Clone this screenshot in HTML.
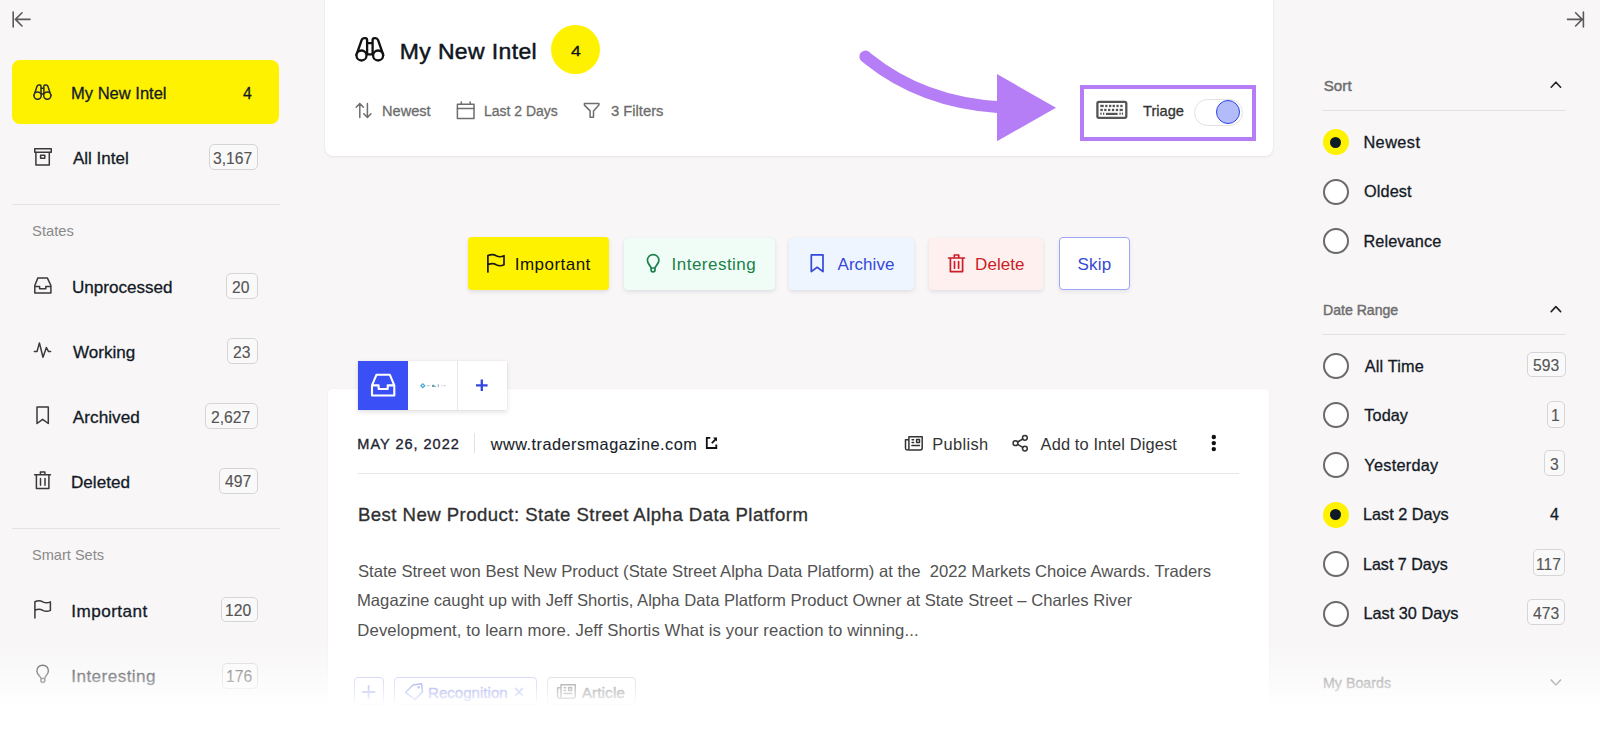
<!DOCTYPE html>
<html><head><meta charset="utf-8">
<style>
html,body{margin:0;padding:0;}
body{width:1600px;height:729px;overflow:hidden;position:relative;background:#f8f6f7;font-family:"Liberation Sans",sans-serif;}
.t{position:absolute;white-space:pre;line-height:1;transform-origin:0 0;}
.bx{position:absolute;box-sizing:border-box;border:1.3px solid #d6d4d4;border-radius:5px;background:#faf9f9;}
.r{position:absolute;box-sizing:border-box;}
.hr{position:absolute;height:1px;background:#e4e2e3;}
.btn{position:absolute;box-sizing:border-box;border-radius:4px;box-shadow:0 2px 4px rgba(30,30,60,0.10),0 0 1px rgba(30,30,60,0.06);}
.radio{position:absolute;box-sizing:border-box;width:26px;height:26px;border-radius:50%;border:2px solid #6a6a6a;background:#fff;}
.radio.on{border:none;background:#fff200;}
.radio.on::after{content:"";position:absolute;left:7.5px;top:7.5px;width:11px;height:11px;border-radius:50%;background:#0e1a28;}
svg{position:absolute;left:0;top:0;}
</style></head><body>
<!-- left sidebar -->
<div class="r" style="left:12px;top:60px;width:267px;height:64px;background:#fff200;border-radius:8px;"></div>
<div class="hr" style="left:12px;top:204px;width:268px;"></div>
<div class="hr" style="left:12px;top:528px;width:268px;"></div>

<!-- header card -->
<div class="r" style="left:325px;top:-10px;width:948px;height:166px;background:#fff;border-radius:0 0 8px 8px;box-shadow:0 1px 3px rgba(0,0,0,0.07),0 0 1px rgba(0,0,0,0.08);"></div>
<div class="r" style="left:551px;top:25px;width:49px;height:49px;border-radius:50%;background:#fff200;"></div>
<div class="r" style="left:1080px;top:84.5px;width:176px;height:56px;border:4.4px solid #b67ef6;"></div>
<div class="r" style="left:1194px;top:98.5px;width:48.5px;height:27px;border-radius:14px;border:1.5px solid #e2e2e2;background:#fff;"></div>
<div class="r" style="left:1215.5px;top:99.8px;width:24.5px;height:24.5px;border-radius:50%;border:1.7px solid #2e45e6;background:#b3bcf8;"></div>

<!-- action buttons -->
<div class="btn" style="left:468px;top:237px;width:141px;height:53px;background:#fff200;"></div>
<div class="btn" style="left:624px;top:237.5px;width:150.5px;height:52.5px;background:#effdf6;"></div>
<div class="btn" style="left:789px;top:237.5px;width:124.5px;height:52.5px;background:#eff5ff;"></div>
<div class="btn" style="left:928.5px;top:237.5px;width:114.5px;height:52.5px;background:#fff0f0;"></div>
<div class="btn" style="left:1058.5px;top:237px;width:71px;height:52.5px;background:#fff;border:1.5px solid #9ea7f4;box-shadow:0 2px 4px rgba(30,30,60,0.08);"></div>

<!-- article card -->
<div class="r" style="left:328px;top:389px;width:941px;height:360px;background:#fff;border-radius:4px;box-shadow:0 0 2px rgba(0,0,0,0.06);"></div>
<div class="r" style="left:358px;top:361px;width:148.5px;height:48.5px;background:#fff;box-shadow:0 2px 5px rgba(0,0,0,0.12),0 0 1px rgba(0,0,0,0.1);"></div>
<div class="r" style="left:358px;top:361px;width:50px;height:48.5px;background:#3a50f6;"></div>
<div class="r" style="left:456.5px;top:361px;width:1px;height:48.5px;background:#e6e6e6;"></div>
<div class="r" style="left:474px;top:433px;width:1px;height:20px;background:#e2e2e2;"></div>
<div class="hr" style="left:358px;top:473px;width:881px;background:#e6e6e6;"></div>
<!-- chips -->
<div class="r" style="left:353.5px;top:677px;width:30.5px;height:28px;border:1px solid #aab2f2;border-radius:4px;"></div>
<div class="r" style="left:394px;top:677px;width:142.5px;height:28px;border:1px solid #aab2f2;border-radius:4px;"></div>
<div class="r" style="left:546.5px;top:677px;width:89px;height:28px;border:1px solid #c4c4c4;border-radius:4px;"></div>

<!-- right sidebar -->
<div class="hr" style="left:1322px;top:109.5px;width:244px;"></div>
<div class="hr" style="left:1322px;top:334px;width:244px;"></div>
<div class="radio on" style="left:1322.6px;top:129px;"></div>
<div class="radio" style="left:1322.6px;top:179px;"></div>
<div class="radio" style="left:1322.6px;top:228px;"></div>
<div class="radio" style="left:1322.6px;top:353px;"></div>
<div class="radio" style="left:1322.6px;top:402.3px;"></div>
<div class="radio" style="left:1322.6px;top:452px;"></div>
<div class="radio on" style="left:1322.6px;top:501.5px;"></div>
<div class="radio" style="left:1322.6px;top:551px;"></div>
<div class="radio" style="left:1322.6px;top:600.6px;"></div>
<div class="t" style="left:71.48px;top:85.63px;font-size:16.86px;font-weight:400;color:#131a26;transform:scaleX(0.9806);-webkit-text-stroke:0.3px currentColor;">My New Intel</div>
<div class="t" style="left:242.69px;top:85.63px;font-size:16.86px;font-weight:400;color:#131a26;transform:scaleX(0.9304);-webkit-text-stroke:0.3px currentColor;">4</div>
<div class="t" style="left:72.80px;top:149.58px;font-size:17.15px;font-weight:400;color:#131a26;transform:scaleX(0.9913);-webkit-text-stroke:0.3px currentColor;">All Intel</div>
<div class="t" style="left:31.63px;top:222.96px;font-size:15.41px;font-weight:400;color:#8a8a8a;transform:scaleX(0.9612);">States</div>
<div class="t" style="left:71.52px;top:278.88px;font-size:17.15px;font-weight:400;color:#131a26;transform:scaleX(0.9947);-webkit-text-stroke:0.3px currentColor;">Unprocessed</div>
<div class="t" style="left:72.80px;top:344.48px;font-size:17.15px;font-weight:400;color:#131a26;transform:scaleX(0.9944);-webkit-text-stroke:0.3px currentColor;">Working</div>
<div class="t" style="left:72.80px;top:408.68px;font-size:17.15px;font-weight:400;color:#131a26;transform:scaleX(1.0000);letter-spacing:0.046px;-webkit-text-stroke:0.3px currentColor;">Archived</div>
<div class="t" style="left:71.43px;top:474.48px;font-size:17.15px;font-weight:400;color:#131a26;transform:scaleX(0.9983);-webkit-text-stroke:0.3px currentColor;">Deleted</div>
<div class="t" style="left:31.64px;top:546.70px;font-size:15.12px;font-weight:400;color:#8a8a8a;transform:scaleX(0.9639);">Smart Sets</div>
<div class="t" style="left:71.26px;top:603.38px;font-size:17.15px;font-weight:400;color:#131a26;transform:scaleX(1.0000);letter-spacing:0.443px;-webkit-text-stroke:0.3px currentColor;">Important</div>
<div class="t" style="left:71.26px;top:668.38px;font-size:17.15px;font-weight:400;color:#131a26;transform:scaleX(1.0000);letter-spacing:0.431px;-webkit-text-stroke:0.3px currentColor;">Interesting</div>
<div class="t" style="left:399.76px;top:40.16px;font-size:22.97px;font-weight:400;color:#0f1520;transform:scaleX(1.0000);letter-spacing:0.377px;-webkit-text-stroke:0.5px currentColor;">My New Intel</div>
<div class="t" style="left:570.65px;top:43.85px;font-size:14.83px;font-weight:400;color:#111;transform:scaleX(1.1903);-webkit-text-stroke:0.3px currentColor;">4</div>
<div class="t" style="left:382.43px;top:104.25px;font-size:14.83px;font-weight:400;color:#6c6c6c;transform:scaleX(0.9833);-webkit-text-stroke:0.3px currentColor;">Newest</div>
<div class="t" style="left:484.48px;top:104.25px;font-size:14.83px;font-weight:400;color:#6c6c6c;transform:scaleX(0.9428);-webkit-text-stroke:0.3px currentColor;">Last 2 Days</div>
<div class="t" style="left:611.08px;top:104.25px;font-size:14.83px;font-weight:400;color:#6c6c6c;transform:scaleX(0.9945);-webkit-text-stroke:0.3px currentColor;">3 Filters</div>
<div class="t" style="left:1142.81px;top:102.96px;font-size:15.41px;font-weight:400;color:#333;transform:scaleX(0.9488);-webkit-text-stroke:0.3px currentColor;">Triage</div>
<div class="t" style="left:514.72px;top:256.30px;font-size:17.01px;font-weight:400;color:#111;transform:scaleX(1.0000);letter-spacing:0.468px;">Important</div>
<div class="t" style="left:671.57px;top:256.30px;font-size:17.01px;font-weight:400;color:#1b7f4a;transform:scaleX(1.0000);letter-spacing:0.481px;">Interesting</div>
<div class="t" style="left:837.50px;top:256.30px;font-size:17.01px;font-weight:400;color:#3548d8;transform:scaleX(1.0000);letter-spacing:0.041px;">Archive</div>
<div class="t" style="left:975.04px;top:256.30px;font-size:17.01px;font-weight:400;color:#cc1d26;transform:scaleX(1.0000);letter-spacing:0.081px;">Delete</div>
<div class="t" style="left:1077.43px;top:256.30px;font-size:17.01px;font-weight:400;color:#3548d8;transform:scaleX(1.0000);letter-spacing:0.228px;">Skip</div>
<div class="t" style="left:357.34px;top:437.30px;font-size:14.53px;font-weight:400;color:#1f2533;transform:scaleX(1.0000);letter-spacing:0.982px;-webkit-text-stroke:0.35px currentColor;">MAY 26, 2022</div>
<div class="t" style="left:490.68px;top:435.72px;font-size:16.28px;font-weight:400;color:#1a1f2b;transform:scaleX(1.0000);letter-spacing:0.492px;-webkit-text-stroke:0.1px currentColor;">www.tradersmagazine.com</div>
<div class="t" style="left:932.19px;top:435.50px;font-size:16.42px;font-weight:400;color:#333;transform:scaleX(1.0000);letter-spacing:0.367px;">Publish</div>
<div class="t" style="left:1040.60px;top:435.50px;font-size:16.42px;font-weight:400;color:#333;transform:scaleX(1.0000);letter-spacing:0.119px;">Add to Intel Digest</div>
<div class="t" style="left:357.91px;top:506.05px;font-size:18.60px;font-weight:400;color:#303030;transform:scaleX(1.0000);letter-spacing:0.451px;-webkit-text-stroke:0.32px currentColor;">Best New Product: State Street Alpha Data Platform</div>
<div class="t" style="left:357.95px;top:563.85px;font-size:16.72px;font-weight:400;color:#525252;transform:scaleX(0.9949);">State Street won Best New Product (State Street Alpha Data Platform) at the  2022 Markets Choice Awards. Traders</div>
<div class="t" style="left:357.37px;top:593.45px;font-size:16.72px;font-weight:400;color:#525252;transform:scaleX(0.9965);">Magazine caught up with Jeff Shortis, Alpha Data Platform Product Owner at State Street – Charles River</div>
<div class="t" style="left:357.36px;top:622.85px;font-size:16.72px;font-weight:400;color:#525252;transform:scaleX(1.0000);letter-spacing:0.097px;">Development, to learn more. Jeff Shortis What is your reaction to winning...</div>
<div class="t" style="left:427.79px;top:684.63px;font-size:15.55px;font-weight:400;color:#3d4cdc;transform:scaleX(0.9707);-webkit-text-stroke:0.45px currentColor;">Recognition</div>
<div class="t" style="left:581.70px;top:684.63px;font-size:15.55px;font-weight:400;color:#333;transform:scaleX(1.0000);letter-spacing:0.022px;-webkit-text-stroke:0.45px currentColor;">Article</div>
<div class="t" style="left:1323.72px;top:78.20px;font-size:15.12px;font-weight:400;color:#6e6e6e;transform:scaleX(1.0000);letter-spacing:0.067px;-webkit-text-stroke:0.45px currentColor;">Sort</div>
<div class="t" style="left:1363.40px;top:134.02px;font-size:16.28px;font-weight:400;color:#131a26;transform:scaleX(1.0000);letter-spacing:0.473px;-webkit-text-stroke:0.3px currentColor;">Newest</div>
<div class="t" style="left:1363.97px;top:182.72px;font-size:16.28px;font-weight:400;color:#131a26;transform:scaleX(1.0000);letter-spacing:0.126px;-webkit-text-stroke:0.3px currentColor;">Oldest</div>
<div class="t" style="left:1363.40px;top:232.82px;font-size:16.28px;font-weight:400;color:#131a26;transform:scaleX(1.0000);letter-spacing:0.119px;-webkit-text-stroke:0.3px currentColor;">Relevance</div>
<div class="t" style="left:1323.27px;top:301.60px;font-size:15.12px;font-weight:400;color:#6e6e6e;transform:scaleX(0.9322);-webkit-text-stroke:0.45px currentColor;">Date Range</div>
<div class="t" style="left:1364.70px;top:357.82px;font-size:16.28px;font-weight:400;color:#131a26;transform:scaleX(1.0000);letter-spacing:0.169px;-webkit-text-stroke:0.3px currentColor;">All Time</div>
<div class="t" style="left:1364.37px;top:407.22px;font-size:16.28px;font-weight:400;color:#131a26;transform:scaleX(1.0000);letter-spacing:0.046px;-webkit-text-stroke:0.3px currentColor;">Today</div>
<div class="t" style="left:1364.37px;top:456.82px;font-size:16.28px;font-weight:400;color:#131a26;transform:scaleX(1.0000);letter-spacing:0.266px;-webkit-text-stroke:0.3px currentColor;">Yesterday</div>
<div class="t" style="left:1363.40px;top:506.32px;font-size:16.28px;font-weight:400;color:#131a26;transform:scaleX(0.9978);-webkit-text-stroke:0.3px currentColor;">Last 2 Days</div>
<div class="t" style="left:1550.28px;top:506.32px;font-size:16.28px;font-weight:400;color:#131a26;transform:scaleX(0.9877);-webkit-text-stroke:0.3px currentColor;">4</div>
<div class="t" style="left:1363.41px;top:555.82px;font-size:16.28px;font-weight:400;color:#131a26;transform:scaleX(0.9871);-webkit-text-stroke:0.3px currentColor;">Last 7 Days</div>
<div class="t" style="left:1363.40px;top:605.42px;font-size:16.28px;font-weight:400;color:#131a26;transform:scaleX(1.0000);letter-spacing:0.015px;-webkit-text-stroke:0.3px currentColor;">Last 30 Days</div>
<div class="t" style="left:1323.06px;top:674.70px;font-size:15.12px;font-weight:400;color:#6e6e6e;transform:scaleX(0.9418);-webkit-text-stroke:0.45px currentColor;">My Boards</div>
<div class="bx" style="left:209.0px;top:144.4px;width:48.8px;height:25.9px"></div>
<div class="t" style="left:213.07px;top:151.28px;font-size:16.86px;color:#555;transform:scaleX(0.93);-webkit-text-stroke:0.15px currentColor;">3,167</div>
<div class="bx" style="left:226.3px;top:273.1px;width:31.5px;height:26.3px"></div>
<div class="t" style="left:232.42px;top:280.18px;font-size:16.86px;color:#555;transform:scaleX(0.93);-webkit-text-stroke:0.15px currentColor;">20</div>
<div class="bx" style="left:227.3px;top:338.4px;width:30.5px;height:25.6px"></div>
<div class="t" style="left:232.96px;top:345.13px;font-size:16.86px;color:#555;transform:scaleX(0.93);-webkit-text-stroke:0.15px currentColor;">23</div>
<div class="bx" style="left:205.4px;top:402.8px;width:52.4px;height:26.2px"></div>
<div class="t" style="left:211.15px;top:409.83px;font-size:16.86px;color:#555;transform:scaleX(0.93);-webkit-text-stroke:0.15px currentColor;">2,627</div>
<div class="bx" style="left:219.1px;top:467.5px;width:38.7px;height:26.0px"></div>
<div class="t" style="left:224.77px;top:474.43px;font-size:16.86px;color:#555;transform:scaleX(0.93);-webkit-text-stroke:0.15px currentColor;">497</div>
<div class="bx" style="left:221.4px;top:596.6px;width:36.4px;height:25.9px"></div>
<div class="t" style="left:225.41px;top:603.48px;font-size:16.86px;color:#555;transform:scaleX(0.93);-webkit-text-stroke:0.15px currentColor;">120</div>
<div class="bx" style="left:222.0px;top:662.5px;width:35.8px;height:26.0px"></div>
<div class="t" style="left:225.75px;top:669.43px;font-size:16.86px;color:#555;transform:scaleX(0.93);-webkit-text-stroke:0.15px currentColor;">176</div>
<div class="bx" style="left:1527.4px;top:351.6px;width:38.5px;height:25.7px"></div>
<div class="t" style="left:1532.78px;top:358.38px;font-size:16.86px;color:#555;transform:scaleX(0.93);-webkit-text-stroke:0.15px currentColor;">593</div>
<div class="bx" style="left:1547.0px;top:401.3px;width:18.4px;height:26.4px"></div>
<div class="t" style="left:1550.81px;top:408.43px;font-size:16.86px;color:#555;transform:scaleX(0.93);-webkit-text-stroke:0.15px currentColor;">1</div>
<div class="bx" style="left:1544.4px;top:450.3px;width:21.0px;height:26.1px"></div>
<div class="t" style="left:1549.79px;top:457.28px;font-size:16.86px;color:#555;transform:scaleX(0.93);-webkit-text-stroke:0.15px currentColor;">3</div>
<div class="bx" style="left:1533.3px;top:549.4px;width:32.1px;height:26.4px"></div>
<div class="t" style="left:1535.82px;top:556.53px;font-size:16.86px;color:#555;transform:scaleX(0.93);-webkit-text-stroke:0.15px currentColor;">117</div>
<div class="bx" style="left:1527.2px;top:598.5px;width:38.2px;height:26.2px"></div>
<div class="t" style="left:1532.58px;top:605.53px;font-size:16.86px;color:#555;transform:scaleX(0.93);-webkit-text-stroke:0.15px currentColor;">473</div>
<svg width="1600" height="729" viewBox="0 0 1600 729" fill="none" stroke-linecap="round" stroke-linejoin="round">
 <!-- collapse icons -->
 <g stroke="#5a5a5a" stroke-width="1.6">
  <path d="M13.2,12 V27 M30,19.4 H15.5 M22,12.8 L15.4,19.4 L22,26"/>
  <path d="M1583.4,12 V27 M1567.5,19.4 H1582 M1575.6,12.8 L1582.2,19.4 L1575.6,26"/>
 </g>
 <!-- sidebar icons -->
 <g stroke="#2a2a2a" stroke-width="1.5">
  <path d="M34,95.5 L37,86.3 Q37.5,85 38.8,85 H40 Q41,85 41,86.3 V95.5 M50.9,95.5 L47.9,86.3 Q47.4,85 46.1,85 H44.9 Q43.9,85 43.9,86.3 V95.5 M41,88.2 H43.9 M41,94 H43.9"/>
  <circle cx="37.6" cy="95.6" r="3.6" fill="#fff200"/><circle cx="47.3" cy="95.6" r="3.6" fill="#fff200"/>
 </g>
 <g stroke="#3a3a3a" stroke-width="1.5">
  <rect x="34.75" y="148.75" width="16.5" height="3.6"/>
  <path d="M35.9,152.4 V165 H49.3 V152.4"/>
  <rect x="40.6" y="155.3" width="4.2" height="3"/>
  <path d="M34.8,293 V285.5 L37.9,277.9 H47.3 L50.9,285.5 V293 Z M34.8,286.4 H39.6 V288.7 H45.8 V286.4 H50.9"/>
  <path d="M34.4,351.4 H37.1 L39.4,342.9 L43,357.2 L46.4,347.5 L48.4,351.4 H50.6"/>
  <path d="M37,406.9 H48.3 V423.5 L42.65,419.3 L37,423.5 Z"/>
  <path d="M34.6,474.8 H50.5 M36.4,474.8 V488.6 H48.9 V474.8 M40.4,474.8 V472 H44.9 V474.8 M40.5,478.6 V485.3 M45,478.6 V485.3"/>
  <path d="M34.9,618.1 V601.8 M34.9,601.8 C38,600.4 40.5,600.6 42.8,601.8 C45.2,603 47.8,603.1 50.4,601.8 V610.3 C47.8,611.6 45.2,611.5 42.8,610.3 C40.5,609.1 38,608.9 34.9,610.3"/>
  <path d="M40.9,678.4 C40.6,676.2 36.9,674.6 36.9,670.9 A5.75,5.75 0 1 1 48.4,670.9 C48.4,674.6 44.8,676.2 44.8,678.4 Z M40.9,678.4 V680.6 Q40.9,682.5 42.85,682.5 Q44.8,682.5 44.8,680.6 V678.4"/>
 </g>
 <!-- header icons -->
 <g stroke="#111" stroke-width="2.3">
  <path d="M356.4,55 L361.6,40.2 Q362.4,38.1 364.5,38.1 H365.2 Q367.1,38.1 367.1,40.1 V54.5 M383.3,55 L378.1,40.2 Q377.3,38.1 375.2,38.1 H374.5 Q372.6,38.1 372.6,40.1 V54.5 M367.1,43.2 H372.6 M367.1,54.3 H372.6"/>
  <circle cx="361.5" cy="55.5" r="5" fill="#fff"/><circle cx="378.1" cy="55.5" r="5" fill="#fff"/>
 </g>
 <g stroke="#6e6e6e" stroke-width="1.5">
  <path d="M359.8,103.5 V117.4 M356.2,107.2 L359.8,103.5 L363.4,107.2 M367.4,103.5 V117.4 M363.8,113.7 L367.4,117.4 L371,113.7"/>
  <rect x="457.4" y="104.2" width="16.6" height="14.3"/>
  <path d="M457.4,108.4 H474 M461.3,102 V104.2 M470.2,102 V104.2"/>
  <path d="M584.4,103.6 H598.9 V105.1 L593.5,110.9 V117.2 H590.1 V110.9 L584.4,105.1 Z"/>
 </g>
 <!-- keyboard -->
 <g stroke="#555" stroke-width="2.3">
  <rect x="1097.4" y="101.8" width="28.9" height="16.1" rx="1.6"/>
 </g>
 <g fill="#555">
  <rect x="1100.3" y="104.8" width="3.4" height="2.3"/><rect x="1105.2" y="104.8" width="2.3" height="2.3"/><rect x="1109" y="104.8" width="2.3" height="2.3"/><rect x="1112.6" y="104.8" width="2.3" height="2.3"/><rect x="1116.4" y="104.8" width="2.3" height="2.3"/><rect x="1120.3" y="104.8" width="2.3" height="2.3"/>
  <rect x="1100.3" y="108.8" width="2.5" height="2.3"/><rect x="1104.2" y="108.8" width="2.3" height="2.3"/><rect x="1108" y="108.8" width="2.3" height="2.3"/><rect x="1111.9" y="108.8" width="2.3" height="2.3"/><rect x="1115.8" y="108.8" width="2.3" height="2.3"/><rect x="1119.6" y="108.8" width="3.2" height="2.3"/>
  <rect x="1100.3" y="112.6" width="1.3" height="2.2"/><rect x="1103" y="112.6" width="1.3" height="2.2"/><rect x="1105.9" y="112.8" width="11.7" height="2.2"/><rect x="1119.4" y="112.6" width="1.3" height="2.2"/><rect x="1121.8" y="112.6" width="1.3" height="2.2"/>
 </g>
 <!-- purple arrow -->
 <path d="M865.3,56.6 C870.3,59.9 914,102.04 1000,107.2" stroke="#b67ef6" stroke-width="12"/>
 <path d="M997,74 L1056,107.8 L997,141.2 Z" fill="#b67ef6"/>
 <!-- button icons -->
 <g stroke="#1a1a1a" stroke-width="1.7">
  <path d="M487.9,272 V255.6 M487.9,255.6 C491.2,254.2 494,254.4 496.2,255.7 C498.6,257 501.3,257.1 504,255.7 V264.7 C501.3,266.1 498.6,266 496.2,264.7 C494,263.4 491.2,263.3 487.9,264.7"/>
 </g>
 <g stroke="#1d7f4b" stroke-width="1.7">
  <path d="M651.1,268 C650.8,265.8 647.4,264.1 647.4,260.3 A5.75,5.75 0 1 1 658.9,260.3 C658.9,264.1 655.3,265.8 655,268 Z M651.1,268 V270 Q651.1,271.8 653.05,271.8 Q655,271.8 655,270 V268"/>
 </g>
 <g stroke="#3548d8" stroke-width="1.7">
  <path d="M811.3,254.8 H823 V271.6 L817.15,267.3 L811.3,271.6 Z"/>
 </g>
 <g stroke="#cc1d26" stroke-width="1.7">
  <path d="M948.6,258 H964.4 M950.4,258 V271.6 H962.6 V258 M954.3,258 V255 H958.7 V258 M954.5,261.5 V268.2 M958.6,261.5 V268.2"/>
 </g>
 <!-- tab icons -->
 <g stroke="#fff" stroke-width="2.1">
  <path d="M372,395.5 V385.4 L376.4,374.8 H389.9 L394.3,385.4 V395.5 Z M372,385.4 H378.6 V389 H387.7 V385.4 H394.3"/>
 </g>
 <path d="M481.8,379.6 V391.1 M476,385.35 H487.6" stroke="#3347e0" stroke-width="2.3" stroke-linecap="butt"/>
 <path d="M422.8,383 L425.7,385.7 L422.8,388.4 L420,385.7 Z" fill="#4aa6d0"/>
 <path d="M422.8,384.6 L424,385.7 L422.8,386.8 L421.6,385.7 Z" fill="#d8f4ff"/>
 <g fill="#6aa0b0"><rect x="427" y="385.2" width="3" height="0.9" fill="#a8c8d4"/><rect x="432" y="384.8" width="2.5" height="2.2"/><rect x="434.5" y="386" width="1.3" height="1"/><rect x="437.8" y="384.2" width="1.1" height="3" fill="#90b8c4"/><rect x="441" y="385.2" width="1.2" height="1" fill="#e8b8c0"/><rect x="443.8" y="385.2" width="1.8" height="1" fill="#b0bcd8"/></g>
 <!-- article icons -->
 <g stroke="#111" stroke-width="1.8" stroke-linecap="butt" stroke-linejoin="miter">
  <path d="M710.3,437.9 H706.8 V448 H716.3 V444.6 M711.8,443.2 L716.3,438.6"/>
 </g>
 <path d="M713,437.4 H717 V441.4 Z" fill="#111"/>
 <g stroke="#333" stroke-width="1.5">
  <path d="M908.9,449.9 H920.3 Q922.2,449.9 922.2,448 V436.8 H908.9 V448.3 Q908.9,449.9 907.2,449.9 Q905.5,449.9 905.5,448.3 V439.7 H908.9"/>
  <path d="M912.1,439.7 H913.6 M912.1,442.4 H913.6 M911.9,445.6 H919.5"/>
  <rect x="916.6" y="439.5" width="2.9" height="2.9"/>
  <circle cx="1024.9" cy="437.8" r="2.4"/><circle cx="1015.5" cy="443.2" r="2.4"/><circle cx="1024.9" cy="448.6" r="2.4"/>
  <path d="M1017.6,442 L1022.8,439 M1017.6,444.4 L1022.8,447.4"/>
 </g>
 <g fill="#111"><circle cx="1213.8" cy="437" r="2.2"/><circle cx="1213.8" cy="443.1" r="2.2"/><circle cx="1213.8" cy="449.1" r="2.2"/></g>
 <!-- chip icons -->
 <path d="M368.6,686 V698 M362.6,692 H374.6" stroke="#6f7ae8" stroke-width="1.8"/>
 <g stroke="#4c5ae0" stroke-width="1.5">
  <path d="M405.5,692.5 L413,685 L421.5,683.7 L422.5,692 L415,699.5 Z"/>
  <circle cx="418.6" cy="687.3" r="0.6" fill="#4c5ae0"/>
  <path d="M515.5,688.4 L522.5,695.4 M522.5,688.4 L515.5,695.4" stroke="#7f89ea"/>
 </g>
 <g stroke="#444" stroke-width="1.5">
  <path d="M561,698.2 H573.5 Q575.2,698.2 575.2,696.5 V684.8 H561 V696.5 Q561,698.2 559.3,698.2 Q557.6,698.2 557.6,696.5 V687.8 H561"/>
  <path d="M564.2,687.8 H565.7 M564.2,690.5 H565.7 M564,693.6 H571.7"/>
  <rect x="568.7" y="687.6" width="2.9" height="2.9"/>
 </g>
 <!-- chevrons right sidebar -->
 <g stroke="#222" stroke-width="1.6">
  <path d="M1551.2,87.2 L1555.9,82.2 L1560.6,87.2"/>
  <path d="M1551.2,311.6 L1555.9,306.6 L1560.6,311.6"/>
  <path d="M1551.2,680 L1555.9,685 L1560.6,680" stroke="#555"/>
 </g>
</svg>
<div class="r" style="left:0;top:642px;width:1600px;height:87px;background:linear-gradient(to bottom,rgba(255,255,255,0) 0px,rgba(255,255,255,0.5) 34px,rgba(255,255,255,0.75) 50px,rgba(255,255,255,1) 65px,#fff 87px);"></div>
</body></html>
